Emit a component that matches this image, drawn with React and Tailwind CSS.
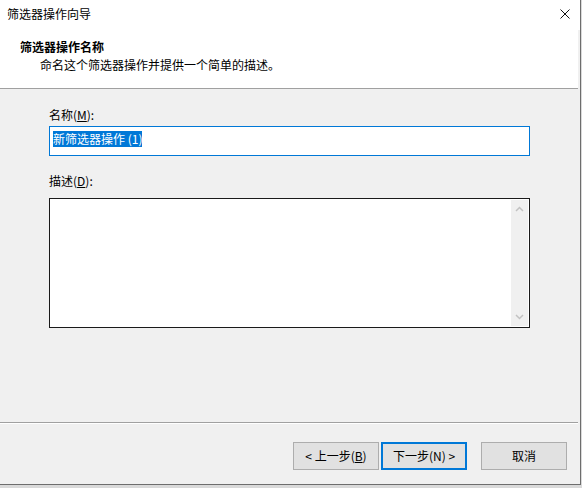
export default function App() {
  const font = { fontFamily: '"Noto Sans CJK SC", "Noto Sans", sans-serif' };
  return (
    <div className="w-[582px] h-[488px] bg-[#d9d9d9] overflow-hidden text-[12px] text-black" style={font}>
      <div className="w-[581px] h-[485px] bg-[#f0f0f0] border-r border-b border-[#6d6d6d] flex flex-col">
        {/* title bar */}
        <div className="h-[30px] bg-white flex items-center justify-between pl-[7px] pr-[10px]">
          <span className="leading-none -mt-[3px]">筛选器操作向导</span>
          <svg width="10" height="10" viewBox="0 0 10 10" className="-mt-[3px]">
            <path d="M0.5 0.5 L9.5 9.5 M9.5 0.5 L0.5 9.5" stroke="#111" strokeWidth="1" />
          </svg>
        </div>
        {/* header */}
        <div className="h-[59px] bg-white border-b border-[#a0a0a0] mr-[2px] pt-[8px]">
          <div className="pl-[20px] font-bold leading-[18px]">筛选器操作名称</div>
          <div className="pl-[40px] leading-[18px]">命名这个筛选器操作并提供一个简单的描述。</div>
        </div>
        {/* body */}
        <div className="flex-1 px-[49px] pt-[17px] flex flex-col">
          <div className="w-[481px]">
            <div className="leading-[18px]">名称(<span className="underline">M</span>):</div>
            <div className="mt-[2px] h-[30px] bg-white border border-[#0078d7] pl-[3px] pt-[3px]">
              <span className="bg-[#0078d7] text-white leading-[16px] inline-block">新筛选器操作 (1)</span>
            </div>
            <div className="mt-[16px] leading-[18px]">描述(<span className="underline">D</span>):</div>
            <div className="mt-[8px] h-[130px] bg-white border border-[#1a1a1a] flex justify-end p-[1px]">
              <div className="w-[17px] bg-[#f0f0f0] flex flex-col items-center justify-between py-[6px]">
                <svg width="9" height="6" viewBox="0 0 9 6">
                  <path d="M1 5 L4.5 1.5 L8 5" fill="none" stroke="#c2c2c2" strokeWidth="1.5" />
                </svg>
                <svg width="9" height="6" viewBox="0 0 9 6">
                  <path d="M1 1 L4.5 4.5 L8 1" fill="none" stroke="#c2c2c2" strokeWidth="1.5" />
                </svg>
              </div>
            </div>
          </div>
        </div>
        {/* footer */}
        <div className="h-[62px] border-t border-[#a0a0a0] mr-[2px] shadow-[inset_0_1px_0_#ffffff] flex items-start pt-[19px] pl-[293px]">
          <button className="w-[86px] h-[28px] bg-[#e1e1e1] border border-[#adadad] leading-none">&lt; 上一步(<span className="underline">B</span>)</button>
          <button className="ml-[2px] w-[86px] h-[28px] bg-[#e1e1e1] border-2 border-[#0078d7] leading-none">下一步(N) &gt;</button>
          <button className="ml-[14px] w-[86px] h-[28px] bg-[#e1e1e1] border border-[#adadad] leading-none">取消</button>
        </div>
      </div>
    </div>
  );
}
